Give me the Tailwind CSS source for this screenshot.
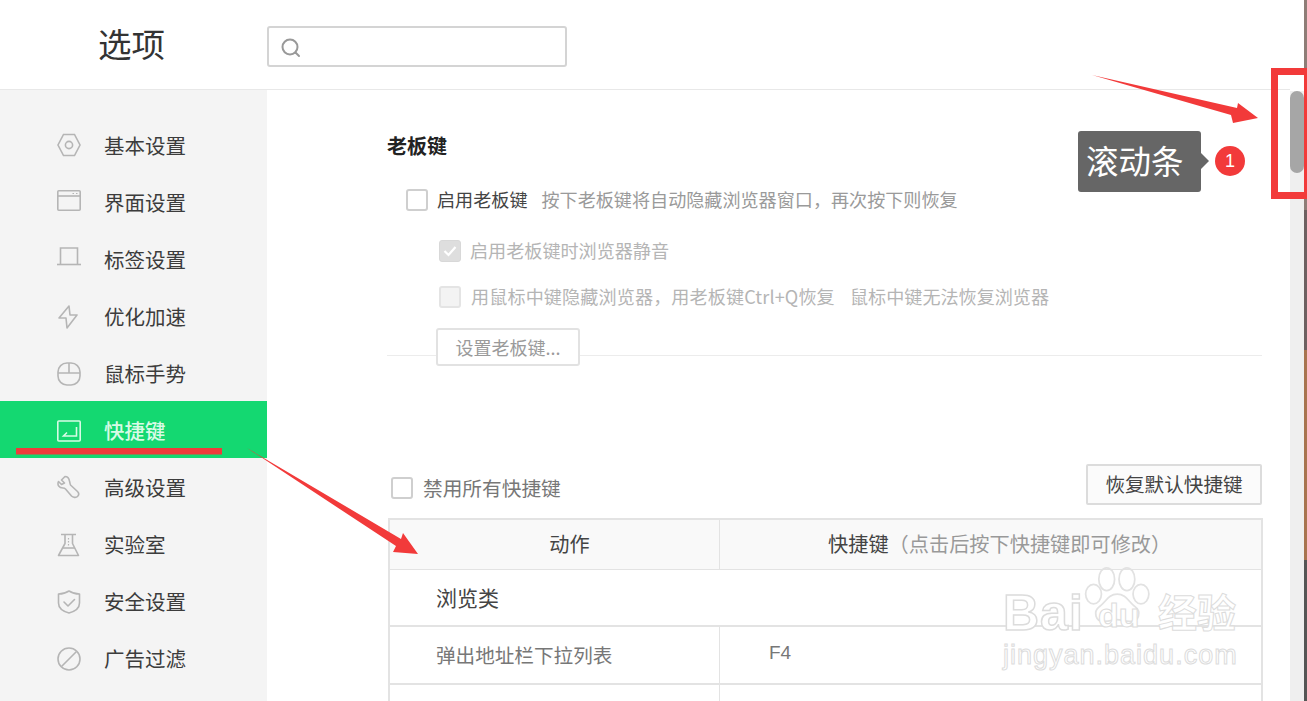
<!DOCTYPE html>
<html lang="zh">
<head>
<meta charset="utf-8">
<script src="https://cdn.jsdelivr.net/npm/@tailwindcss/browser@4"></script>
</head>
<body class="bg-white overflow-hidden font-['Noto_Sans_CJK_SC','Noto_Sans',sans-serif] text-[#333]">
<div class="relative w-[1307px] h-[701px] overflow-hidden flex">
  <div class="w-[1290px] h-full flex flex-col">
    <header class="h-[90px] shrink-0 border-b border-[#e8e8e8] flex items-center">
      <div class="w-[267px] pl-[98px] text-[33.500px] leading-none text-[#333] pb-[4px]">选项</div>
      <div class="w-[300px] h-[41px] mt-[3px] border-2 border-[#d4d4d4] rounded-[3px] flex items-center pl-[11px]">
        <svg class="w-[22px] h-[22px] mt-[4px]" viewBox="0 0 22 22" fill="none" stroke="#999" stroke-width="2"><circle cx="10" cy="10" r="7.5"/><path d="M15.5 15.5l3.5 3.5" stroke-linecap="round"/></svg>
      </div>
    </header>
    <div class="flex flex-1 min-h-0">
      <nav class="w-[267px] shrink-0 bg-[#f4f4f4] pt-[26px] text-[20.500px] leading-none text-[#3c3c3c]">
        <div class="h-[57px] flex items-center pl-[57px] gap-[24px]">
          <svg class="w-[24px] h-[24px]" viewBox="0 0 24 24" fill="none" stroke="#b5b5b5" stroke-width="1.6"><path d="M6.500 1.500h11L23 12l-5.500 10.500h-11L1 12z"/><circle cx="12" cy="12" r="3.6"/></svg><span class="pt-[2px] -ml-px">基本设置</span></div>
        <div class="h-[57px] flex items-center pl-[57px] gap-[24px]">
          <svg class="w-[24px] h-[24px]" viewBox="0 0 24 24" fill="none" stroke="#b5b5b5" stroke-width="1.6"><rect x="0.8" y="0.8" width="22.4" height="19.500" rx="1"/><path d="M1 6h22"/><path d="M15.500 3.500h1.500M19 3.500h1.500" stroke-width="1.200"/></svg><span class="pt-[2px] -ml-px">界面设置</span></div>
        <div class="h-[57px] flex items-center pl-[57px] gap-[24px]">
          <svg class="w-[24px] h-[24px]" viewBox="0 0 24 24" fill="none" stroke="#b5b5b5" stroke-width="1.6"><path d="M3.500 17V1h17v16"/><path d="M0 17.500h24"/></svg><span class="pt-[2px] -ml-px">标签设置</span></div>
        <div class="h-[57px] flex items-center pl-[57px] gap-[24px]">
          <svg class="w-[24px] h-[24px] mt-[2px]" viewBox="0 0 24 24" fill="none" stroke="#b5b5b5" stroke-width="1.6" stroke-linejoin="round"><path d="M12 1L2 13h7l1 10L20 10h-7z"/></svg><span class="pt-[2px] -ml-px">优化加速</span></div>
        <div class="h-[57px] flex items-center pl-[57px] gap-[24px]">
          <svg class="w-[24px] h-[24px] mt-[2px]" viewBox="0 0 24 24" fill="none" stroke="#b5b5b5" stroke-width="1.6"><rect x="1" y="1" width="22" height="22" rx="9"/><path d="M1 11h22M12 1v10"/></svg><span class="pt-[2px] -ml-px">鼠标手势</span></div>
        <div class="h-[57px] flex items-center pl-[57px] gap-[24px] bg-[#14d871] text-[#d8fbe6]">
          <svg class="w-[24px] h-[24px] mt-[4px]" viewBox="0 0 24 24" fill="none" stroke="#d8fbe6" stroke-width="1.6"><rect x="0.8" y="1" width="22.4" height="20" rx="1"/><path d="M19.500 7v9H6.500l3.500-3.500"/></svg><span class="font-medium pt-[2px] -ml-px">快捷键</span></div>
        <div class="h-[57px] flex items-center pl-[57px] gap-[24px]">
          <svg class="w-[24px] h-[24px]" viewBox="0 0 24 24" fill="none" stroke="#b5b5b5" stroke-width="1.6" stroke-linejoin="round"><path d="M8 1.500L4.500 5l3 3-3 1.500L1.500 6.500C0 10 2 13 6 13c1 0 2 .5 2.500 1l6 7c1.500 1.500 4.500 2 6 .5s1.500-3.500 0-5l-7-6.500C13 9 13 8 12.500 6 12 3 10 1.500 8 1.500z"/></svg><span class="pt-[2px] -ml-px">高级设置</span></div>
        <div class="h-[57px] flex items-center pl-[57px] gap-[24px]">
          <svg class="w-[24px] h-[24px] mt-[3px]" viewBox="0 0 24 24" fill="none" stroke="#b5b5b5" stroke-width="1.6" stroke-linejoin="round"><path d="M4 1.500h15M8 1.500v9L1.500 22.500h20L15.500 10.500v-9"/><path d="M5 15h13"/><path d="M11.500 5v8" stroke-dasharray="1.500 1.500" stroke-width="1.200"/></svg><span class="pt-[2px] -ml-px">实验室</span></div>
        <div class="h-[57px] flex items-center pl-[57px] gap-[24px]">
          <svg class="w-[24px] h-[24px] mt-[2px]" viewBox="0 0 24 24" fill="none" stroke="#b5b5b5" stroke-width="1.6" stroke-linejoin="round"><path d="M12 1c3 2 7 3 10.500 3v9c0 5-5 8.500-10.500 10C6.500 21.500 1.500 18 1.500 13V4C5 4 9 3 12 1z"/><path d="M7 12l4 4 6.500-6.500" stroke-linecap="round"/></svg><span class="pt-[2px] -ml-px">安全设置</span></div>
        <div class="h-[57px] flex items-center pl-[57px] gap-[24px]">
          <svg class="w-[24px] h-[24px] mt-[3px]" viewBox="0 0 24 24" fill="none" stroke="#b5b5b5" stroke-width="1.6"><circle cx="12" cy="12" r="11"/><path d="M4.500 19.500l15-15"/></svg><span class="pt-[2px] -ml-px">广告过滤</span></div>
      </nav>
      <main class="flex-1 pl-[120px] pr-[28px] pt-[44px] min-w-0">
        <h2 class="text-[20px] leading-[24px] font-bold text-[#222]">老板键</h2>
        <div class="border-b border-[#ececec] h-[198px] pt-[26px]">
          <div class="flex items-center h-[32px] pl-[19px] text-[18.100px]">
            <span class="w-[22px] h-[22px] border-2 border-[#cfcfcf] rounded-[3px] mr-[9px]"></span>
            <span class="text-[#444]">启用老板键</span><span class="ml-[14px] text-[#9a9a9a]">按下老板键将自动隐藏浏览器窗口，再次按下则恢复</span>
          </div>
          <div class="flex items-center h-[32px] mt-[19px] pl-[52px] text-[18.100px] text-[#b5b5b5]">
            <span class="w-[22px] h-[22px] bg-[#dedede] border border-[#d8d8d8] rounded-[3px] mr-[9px] flex items-center justify-center"><svg class="w-[16px] h-[16px]" viewBox="0 0 16 16" fill="none" stroke="#fff" stroke-width="2.200"><path d="M2.500 8l4 4 7-8"/></svg></span>
            <span>启用老板键时浏览器静音</span>
          </div>
          <div class="flex items-center h-[32px] mt-[14px] pl-[52px] text-[18.100px] text-[#b5b5b5]">
            <span class="w-[22px] h-[22px] bg-[#f3f3f3] border-2 border-[#e4e4e4] rounded-[3px] mr-[10px]"></span>
            <span class="w-[379px] tracking-[0.120px]">用鼠标中键隐藏浏览器，用老板键Ctrl+Q恢复</span><span>鼠标中键无法恢复浏览器</span>
          </div>
          <div class="ml-[49px] mt-[15px] w-[144px] h-[38px] border-2 border-[#e2e2e2] rounded-[3px] bg-white flex items-center justify-center text-[18px] text-[#9a9a9a] relative">设置老板键...</div>
        </div>
        <div class="flex items-center justify-between mt-[107px] h-[42px] pl-[4px]">
          <label class="flex items-center text-[19.700px] text-[#777] pt-[8px]">
            <span class="w-[22px] h-[22px] border-2 border-[#cfcfcf] rounded-[3px] mr-[10px]"></span>禁用所有快捷键
          </label>
          <button class="w-[176px] h-[41px] border-2 border-[#dcdcdc] rounded-[2px] bg-[#fbfbfb] text-[19.600px] text-[#444]">恢复默认快捷键</button>
        </div>
        <div class="mt-[13px] ml-px w-[875px] border-x-2 border-t-2 border-[#e3e3e3]">
          <div class="flex h-[50px] bg-[#f9f9f9] border-b border-[#e3e3e3] text-[20.200px] items-center">
            <div class="w-[330px] h-full flex items-center justify-center border-r border-[#e3e3e3] text-[#444] pl-[30px] pb-px">动作</div>
            <div class="flex-1 pl-[108px] pb-px text-[#444] [text-spacing-trim:space-all] whitespace-nowrap">快捷键<span class="text-[#999]">（点击后按下快捷键即可修改）</span></div>
          </div>
          <div class="h-[57px] border-b-2 border-[#e3e3e3] flex items-center pl-[46px] text-[21px] text-[#444]">浏览类</div>
          <div class="flex h-[58px] border-b-2 border-[#e3e3e3] items-center text-[19.600px] text-[#777]">
            <div class="w-[330px] h-full border-r border-[#e3e3e3] flex items-center pl-[46px]">弹出地址栏下拉列表</div>
            <div class="pl-[49px] font-['Liberation_Sans',sans-serif] text-[19px] pb-[4px]">F4</div>
          </div>
          <div class="flex h-[40px]"><div class="w-[330px] border-r border-[#e3e3e3]"></div></div>
        </div>
      </main>
    </div>
  </div>
  <div class="w-[14px] h-full pt-[91px]">
    <div class="h-full bg-[#efefef]">
      <div class="w-[14px] h-[82px] rounded-[7px] bg-[#a6a6a6]"></div>
    </div>
  </div>
  <div class="w-[3px] h-full flex flex-col">
    <div class="h-[210px] bg-[#8e7d77]"></div>
    <div class="h-[140px] bg-[#6d6060]"></div>
    <div class="h-[210px] bg-[#a8744f]"></div>
    <div class="flex-1 bg-[#555]"></div>
  </div>

  <!-- annotations -->
  <div class="absolute left-[1271px] top-[68px] w-[40px] h-[131px] border-[7px] border-[#f23a3a]"></div>
  <svg class="absolute left-0 top-0 pointer-events-none" width="1307" height="701" viewBox="0 0 1307 701">
    <path d="M1092 75L1237 108L1238 103L1258 118L1233 123L1231 115Z" fill="#f23a3a"/>
    <path d="M16 448h206v6.500H16z" fill="#ee3b3b"/>
    <path d="M247 448L401 539L403 533L418 554L393 552L396 546Z" fill="#f23a3a"/>
  </svg>
  <div class="absolute left-[1078px] top-[131px] w-[123px] h-[61px] bg-[#666] rounded-[3px] flex items-center pl-[8px] pb-[2px] text-[32.500px] leading-none text-white">滚动条
    <span class="absolute -right-[8px] top-[22px] w-0 h-0 border-y-[8px] border-y-transparent border-l-[8px] border-l-[#666]"></span>
  </div>
  <div class="absolute left-[1215px] top-[146px] w-[30px] h-[30px] rounded-full bg-[#f23a3a] text-white text-[18px] flex items-center justify-center font-['Liberation_Sans',sans-serif]">1</div>
  <div class="absolute left-[1003px] top-[560px] w-[240px] h-[115px] select-none font-['Liberation_Sans',sans-serif]">
    <svg class="absolute left-[80px] top-0" width="72" height="70" viewBox="0 0 82 70" fill="none" stroke="#e2e2e2" stroke-width="2"><ellipse cx="27" cy="17" rx="9" ry="13"/><ellipse cx="50" cy="17" rx="9" ry="13"/><ellipse cx="12" cy="34" rx="9" ry="11"/><ellipse cx="66" cy="34" rx="9" ry="11"/><path d="M39 34c-10 0-13 9-20 14-8 6-5 18 6 17 6 0 9-2 14-2s8 2 14 2c11 1 14-11 6-17-7-5-10-14-20-14z"/></svg>
    <div class="absolute left-0 top-[28px] text-[50px] font-bold leading-none tracking-[1px] [-webkit-text-stroke:1.500px_#dcdcdc] text-white">Bai</div>
    <div class="absolute left-[95px] top-[38px] text-[34px] font-bold leading-none [-webkit-text-stroke:1px_#dcdcdc] text-white">du</div>
    <div class="absolute left-[155px] top-[31px] text-[39px] font-bold leading-none font-['Noto_Sans_CJK_SC'] [-webkit-text-stroke:1px_#dcdcdc] text-white">经验</div>
    <div class="absolute left-0 top-[82px] text-[27px] leading-none tracking-[1px] [-webkit-text-stroke:1px_#dcdcdc] text-white">jingyan.baidu.com</div>
  </div>
</div>
</body>
</html>
